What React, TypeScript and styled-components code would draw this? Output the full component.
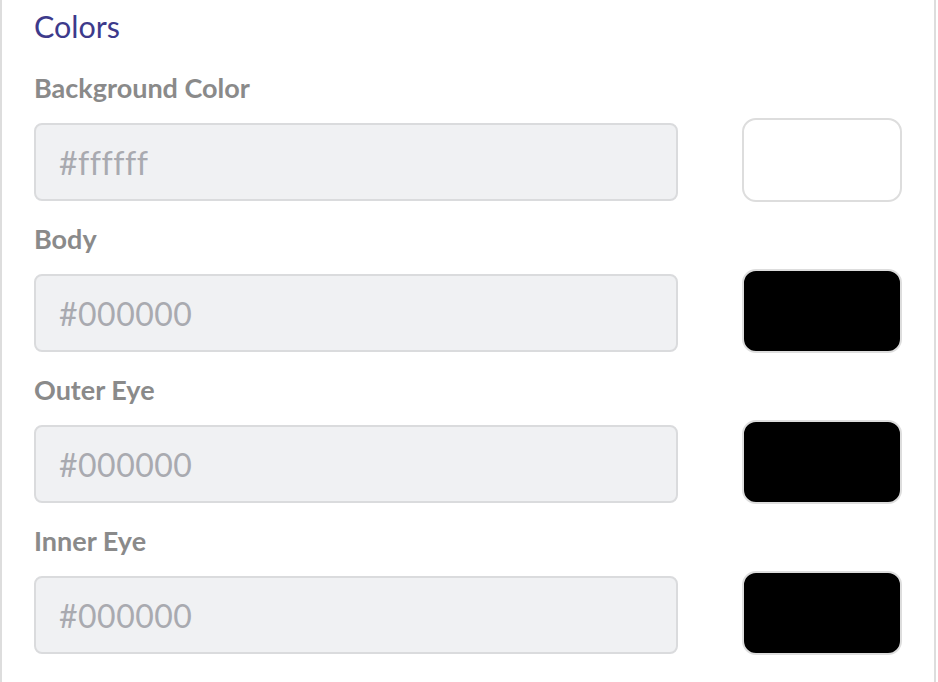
import React from "react";
import styled, { createGlobalStyle } from "styled-components";

const Global = createGlobalStyle`
  body {
    margin: 0;
    background: #ffffff;
    font-family: Lato, "Open Sans", sans-serif;
  }
`;

const Panel = styled.div`
  box-sizing: border-box;
  width: 936px;
  min-height: 682px;
  border-left: 2px solid #dddddd;
  border-right: 2px solid #dddddd;
  padding: 8px 31px 0 32px;
`;

const Title = styled.h2`
  margin: 0 0 29px;
  font-size: 30.5px;
  line-height: 36px;
  font-weight: 400;
  color: #3d3a8b;
`;

const Field = styled.div`
  margin-bottom: 22px;
`;

const Label = styled.label`
  display: block;
  font-size: 27px;
  line-height: 30px;
  font-weight: 700;
  color: #8a8a8a;
  margin-bottom: 15px;
`;

const Row = styled.div`
  display: flex;
  align-items: flex-start;
  gap: 64px;
`;

const HexInput = styled.input`
  box-sizing: border-box;
  width: 644px;
  height: 78px;
  margin: 5px 0 0;
  padding: 0 0 0 23px;
  border: 2px solid #dadbdd;
  border-radius: 8px;
  background: #f0f1f3;
  font-family: Lato, "Open Sans", sans-serif;
  font-size: 32px;
  letter-spacing: 0.5px;
  color: #a9aab0;
  outline: none;

  &::placeholder {
    color: #a9aab0;
  }
`;

const Swatch = styled.div<{ color: string }>`
  box-sizing: border-box;
  width: 160px;
  height: 84px;
  border: 2px solid #dddddd;
  border-radius: 14px;
  background: ${(p) => p.color};
`;

const fields = [
  { label: "Background Color", value: "#ffffff" },
  { label: "Body", value: "#000000" },
  { label: "Outer Eye", value: "#000000" },
  { label: "Inner Eye", value: "#000000" },
];

export default function App() {
  return (
    <>
      <Global />
      <Panel>
        <Title>Colors</Title>
        {fields.map((f) => (
          <Field key={f.label}>
            <Label>{f.label}</Label>
            <Row>
              <HexInput placeholder={f.value} readOnly />
              <Swatch color={f.value} />
            </Row>
          </Field>
        ))}
      </Panel>
    </>
  );
}
